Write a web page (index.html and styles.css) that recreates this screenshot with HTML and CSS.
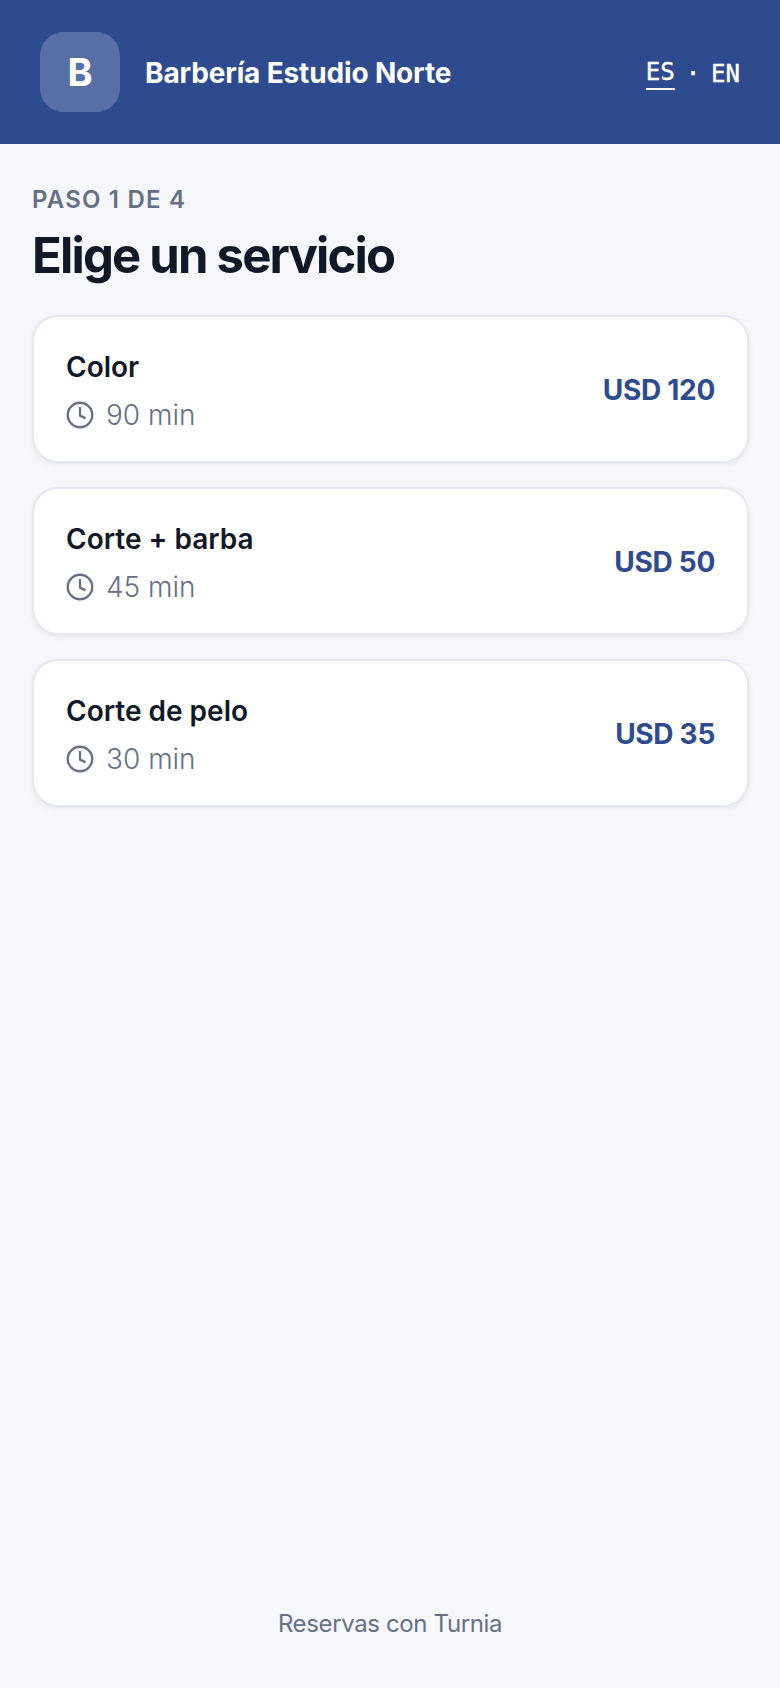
FILE: index.html
```html
<!DOCTYPE html>
<html lang="es">
<head>
    <meta charset="UTF-8">
    <meta name="viewport" content="width=device-width, initial-scale=1.0">
    <title>Barbería Estudio Norte</title>
    <link rel="stylesheet" href="styles.css">
</head>
<body>
    <header class="topbar">
        <div class="brand">
            <div class="logo">B</div>
            <div class="brand-name">Barbería Estudio Norte</div>
        </div>
        <div class="lang">
            <span class="lang-on">ES</span>
            <span class="lang-dot">·</span>
            <span>EN</span>
        </div>
    </header>

    <main class="content">
        <div class="step">PASO 1 DE 4</div>
        <h1>Elige un servicio</h1>

        <div class="service">
            <div class="service-info">
                <div class="service-name">Color</div>
                <div class="service-time">
                    <svg class="clock" viewBox="0 0 24 24"><circle cx="12" cy="12" r="10.5"/><path d="M12 6v6.5l4 2"/></svg>
                    <span>90 min</span>
                </div>
            </div>
            <div class="price">USD 120</div>
        </div>

        <div class="service">
            <div class="service-info">
                <div class="service-name">Corte + barba</div>
                <div class="service-time">
                    <svg class="clock" viewBox="0 0 24 24"><circle cx="12" cy="12" r="10.5"/><path d="M12 6v6.5l4 2"/></svg>
                    <span>45 min</span>
                </div>
            </div>
            <div class="price">USD 50</div>
        </div>

        <div class="service">
            <div class="service-info">
                <div class="service-name">Corte de pelo</div>
                <div class="service-time">
                    <svg class="clock" viewBox="0 0 24 24"><circle cx="12" cy="12" r="10.5"/><path d="M12 6v6.5l4 2"/></svg>
                    <span>30 min</span>
                </div>
            </div>
            <div class="price">USD 35</div>
        </div>
    </main>

    <footer class="foot">Reservas con Turnia</footer>
</body>
</html>
```

FILE: styles.css
```css
* {
    box-sizing: border-box;
}
body {
    margin: 0;
    height: 1688px;
    display: flex;
    flex-direction: column;
    background-color: #f5f7fb;
    font-family: Inter, "Noto Sans", sans-serif;
    color: #111827;
}
.topbar {
    height: 144px;
    padding: 0 40px;
    display: flex;
    align-items: center;
    justify-content: space-between;
    background-color: #2e4b8f;
    color: white;
}
.brand {
    display: flex;
    align-items: center;
    gap: 25px;
}
.logo {
    width: 80px;
    height: 80px;
    border-radius: 24px;
    display: flex;
    align-items: center;
    justify-content: center;
    background-color: rgba(255, 255, 255, 0.2);
    font-size: 38px;
    font-weight: 700;
}
.brand-name {
    padding-top: 2px;
    font-size: 28px;
    font-weight: 700;
    letter-spacing: -0.15px;
}
.lang {
    display: flex;
    align-items: center;
    gap: 11px;
    padding-top: 3px;
    font-family: "DejaVu Sans Mono", monospace;
    font-size: 24px;
    -webkit-text-stroke: 0.4px white;
}
.lang-on {
    padding-bottom: 2px;
    border-bottom: 2px solid white;
}
.content {
    flex: 1;
    padding: 41px 31px 0 32px;
}
.step {
    font-size: 24px;
    font-weight: 600;
    line-height: 30px;
    letter-spacing: 1.2px;
    color: #667085;
}
h1 {
    margin: 11px 0 29px;
    font-size: 49px;
    font-weight: 700;
    line-height: 60px;
    letter-spacing: -1.8px;
}
.service {
    height: 148px;
    margin-bottom: 24px;
    padding: 0 32px;
    display: flex;
    align-items: center;
    justify-content: space-between;
    background-color: white;
    border: 2px solid #e5e8f0;
    border-radius: 26px;
    box-shadow: 0 2px 6px rgba(17, 24, 39, 0.06);
}
.service-info {
    padding-top: 4px;
}
.service-name {
    font-size: 28px;
    font-weight: 600;
    line-height: 36px;
}
.service-time {
    margin-top: 12px;
    display: flex;
    align-items: center;
    gap: 12px;
    font-size: 28px;
    font-weight: 300;
    line-height: 36px;
    color: #667085;
}
.clock {
    width: 28px;
    height: 28px;
    fill: none;
    stroke: #667085;
    stroke-width: 2;
    stroke-linecap: round;
    stroke-linejoin: round;
}
.price {
    padding-top: 2px;
    font-size: 28px;
    font-weight: 700;
    letter-spacing: -0.3px;
    color: #2e4b8f;
}
.foot {
    padding-bottom: 49px;
    text-align: center;
    font-size: 24px;
    line-height: 30px;
    letter-spacing: -0.37px;
    color: #667085;
}
```
